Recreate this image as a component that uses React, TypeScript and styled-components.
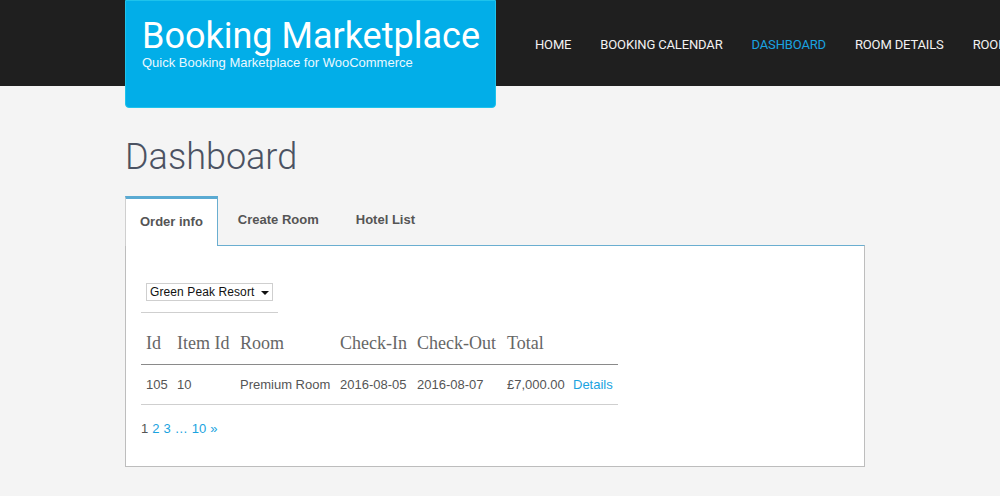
import React from "react";
import styled, { createGlobalStyle } from "styled-components";

const Global = createGlobalStyle`
  html, body { margin: 0; padding: 0; }
  body {
    background: #f4f4f4;
    font-family: "Liberation Sans", Arial, sans-serif;
    overflow-x: hidden;
  }
`;

const Header = styled.header`
  background: #1f1f1f;
  height: 86px;
  overflow-x: clip;
  overflow-y: visible;
`;

const HeaderInner = styled.div`
  width: 750px;
  margin: 0 auto;
  display: flex;
  align-items: flex-start;
  white-space: nowrap;
`;

const Logo = styled.div`
  position: relative;
  z-index: 2;
  box-sizing: border-box;
  width: 371px;
  height: 108px;
  background: #02aee8;
  border: 1px solid #1ec3ec;
  border-radius: 0 0 4px 4px;
  padding: 15px 0 0 16px;
  color: #fff;
  flex-shrink: 0;
`;

const LogoTitle = styled.div`
  font-family: Roboto, sans-serif;
  font-size: 36px;
  line-height: 40px;
  font-weight: 400;
`;

const LogoSub = styled.div`
  font-family: "Liberation Sans", Arial, sans-serif;
  font-size: 13px;
  line-height: 14px;
  color: #eaf8ff;
`;

const Nav = styled.nav`
  display: flex;
  gap: 29px;
  margin-left: 39px;
  height: 86px;
  align-items: center;
  padding-top: 2px;
  box-sizing: border-box;
`;

const NavItem = styled.a<{ $active?: boolean }>`
  font-family: Roboto, sans-serif;
  font-size: 13px;
  letter-spacing: -0.15px;
  text-transform: uppercase;
  color: ${(p) => (p.$active ? "#1aa3e0" : "#f2f2f2")};
  text-decoration: none;
`;

const Main = styled.main`
  width: 750px;
  margin: 0 auto;
  padding-top: 49px;
`;

const Title = styled.h1`
  font-family: Roboto, sans-serif;
  font-weight: 300;
  font-size: 36px;
  line-height: 44px;
  color: #4b5262;
  margin: 0 0 17px 0;
`;

const TabList = styled.div`
  display: flex;
  align-items: flex-start;
  position: relative;
  z-index: 1;
  margin-bottom: -1px;
`;

const Tab = styled.div<{ $active?: boolean }>`
  font-family: "Liberation Sans", Arial, sans-serif;
  font-weight: bold;
  font-size: 13px;
  line-height: 17px;
  color: #555;
  cursor: pointer;
  ${(p) =>
    p.$active
      ? `
    background: #fff;
    border-top: 3px solid #5aaad2;
    border-left: 1px solid #cfcfcf;
    border-right: 1px solid #6aaed0;
    padding: 14px 14px 16px 14px;
  `
      : `
    padding: 15px 17px 13px 17px;
    margin-left: 3px;
  `}
`;

const Panel = styled.section`
  width: 740px;
  box-sizing: border-box;
  background: #fff;
  border: 1px solid #bdbdbd;
  border-top: 1px solid #6aaed0;
  padding: 36px 15px 27px 15px;
`;

const Select = styled.div`
  display: inline-flex;
  align-items: center;
  gap: 7px;
  margin-left: 5px;
  height: 18px;
  box-sizing: border-box;
  border: 1px solid #cfcfcf;
  padding: 0 3px 0 3px;
  font-size: 12px;
  letter-spacing: 0.1px;
  color: #111;
`;

const Caret = styled.span`
  width: 0;
  height: 0;
  border-left: 4px solid transparent;
  border-right: 4px solid transparent;
  border-top: 4px solid #111;
  margin-top: 1px;
`;

const Rule = styled.hr`
  width: 137px;
  margin: 11px 0 9px 0;
  border: 0;
  border-top: 1px solid #cfcfcf;
`;

const Table = styled.table`
  border-collapse: collapse;
  table-layout: fixed;
  width: 477px;
`;

const Th = styled.th`
  font-family: "Liberation Serif", "Times New Roman", serif;
  font-weight: normal;
  font-size: 18px;
  line-height: 22px;
  color: #666;
  text-align: left;
  padding: 10px 5px 10px 5px;
  border-bottom: 1px solid #8a8a8a;
  white-space: nowrap;
`;

const Td = styled.td`
  font-size: 13px;
  line-height: 20px;
  color: #555;
  padding: 10px 5px 9px 5px;
  border-bottom: 1px solid #cfcfcf;
  white-space: nowrap;
`;

const Link = styled.a`
  color: #1aa3e0;
  text-decoration: none;
`;

const Pagination = styled.div`
  margin-top: 14px;
  font-size: 13px;
  line-height: 20px;
  color: #555;
  display: flex;
  gap: 4px;
`;

const columns = [31, 63, 100, 77, 90, 66, 50];

export default function App() {
  return (
    <>
      <Global />
      <Header>
        <HeaderInner>
          <Logo>
            <LogoTitle>Booking Marketplace</LogoTitle>
            <LogoSub>Quick Booking Marketplace for WooCommerce</LogoSub>
          </Logo>
          <Nav>
            <NavItem>Home</NavItem>
            <NavItem>Booking Calendar</NavItem>
            <NavItem $active>Dashboard</NavItem>
            <NavItem>Room Details</NavItem>
            <NavItem>Rooms</NavItem>
          </Nav>
        </HeaderInner>
      </Header>
      <Main>
        <Title>Dashboard</Title>
        <TabList>
          <Tab $active>Order info</Tab>
          <Tab>Create Room</Tab>
          <Tab>Hotel List</Tab>
        </TabList>
        <Panel>
          <Select>
            Green Peak Resort <Caret />
          </Select>
          <Rule />
          <Table>
            <colgroup>
              {columns.map((w, i) => (
                <col key={i} style={{ width: w }} />
              ))}
            </colgroup>
            <thead>
              <tr>
                <Th>Id</Th>
                <Th>Item Id</Th>
                <Th>Room</Th>
                <Th>Check-In</Th>
                <Th>Check-Out</Th>
                <Th>Total</Th>
                <Th></Th>
              </tr>
            </thead>
            <tbody>
              <tr>
                <Td>105</Td>
                <Td>10</Td>
                <Td>Premium Room</Td>
                <Td>2016-08-05</Td>
                <Td>2016-08-07</Td>
                <Td>£7,000.00</Td>
                <Td>
                  <Link>Details</Link>
                </Td>
              </tr>
            </tbody>
          </Table>
          <Pagination>
            <span>1</span>
            <Link>2</Link>
            <Link>3</Link>
            <Link>…</Link>
            <Link>10</Link>
            <Link>»</Link>
          </Pagination>
        </Panel>
      </Main>
    </>
  );
}
